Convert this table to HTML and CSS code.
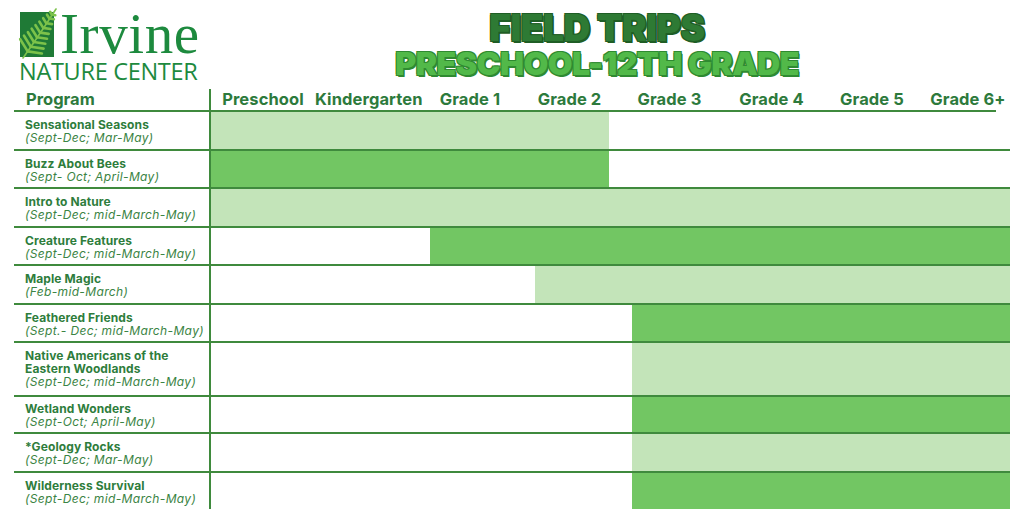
FILE: index.html
```html
<!DOCTYPE html>
<html lang="en">
<head>
<meta charset="utf-8">
<title>Field Trips – Irvine Nature Center</title>
<link rel="stylesheet" href="styles.css">
</head>
<body>
<div class="page">
  <header class="top">
    <div class="logo">
      <div class="logo-row">
        <svg class="fern" width="42" height="52" viewBox="0 0 42 52" aria-hidden="true">
          <rect x="4" y="5" width="34" height="45" fill="#1f7a36"/>
          <g stroke="#7cc24a" stroke-width="2.6" stroke-linecap="round" fill="none">
            <path d="M7 51 Q22 30 40 2" stroke-width="1.6"/>
            <line x1="11.7" y1="44.4" x2="4.2" y2="32.2"/>
            <line x1="11.7" y1="44.4" x2="25.9" y2="46.5"/>
            <line x1="14.8" y1="39.7" x2="8.0" y2="28.7"/>
            <line x1="14.8" y1="39.7" x2="27.6" y2="41.6"/>
            <line x1="17.9" y1="35.0" x2="11.9" y2="25.2"/>
            <line x1="17.9" y1="35.0" x2="29.3" y2="36.7"/>
            <line x1="21.0" y1="30.3" x2="15.7" y2="21.7"/>
            <line x1="21.0" y1="30.3" x2="31.0" y2="31.8"/>
            <line x1="24.1" y1="25.6" x2="19.5" y2="18.2"/>
            <line x1="24.1" y1="25.6" x2="32.7" y2="26.9"/>
            <line x1="27.2" y1="20.9" x2="23.4" y2="14.7"/>
            <line x1="27.2" y1="20.9" x2="34.4" y2="22.0"/>
            <line x1="30.3" y1="16.2" x2="27.2" y2="11.2"/>
            <line x1="30.3" y1="16.2" x2="36.1" y2="17.1"/>
            <line x1="33.4" y1="11.5" x2="31.0" y2="7.7"/>
            <line x1="33.4" y1="11.5" x2="37.9" y2="12.2"/>
            <line x1="35.9" y1="7.7" x2="34.1" y2="4.8"/>
            <line x1="35.9" y1="7.7" x2="39.3" y2="8.2"/>
          </g>
        </svg>
        <span class="irvine">Irvine</span>
      </div>
      <div class="nature">NATURE CENTER</div>
    </div>
    <div class="title">
      <div class="t1">FIELD TRIPS</div>
      <div class="t2">PRESCHOOL-12TH GRADE</div>
    </div>
  </header>

  <section class="chart">
    <div class="row head">
      <div class="prog">Program</div>
      <div class="grades">
        <span>Preschool</span><span>Kindergarten</span><span>Grade 1</span><span>Grade 2</span>
        <span>Grade 3</span><span>Grade 4</span><span>Grade 5</span><span>Grade 6+</span>
      </div>
    </div>

    <div class="row">
      <div class="prog"><b>Sensational Seasons</b><i>(Sept-Dec; Mar-May)</i></div>
      <div class="cells"><div class="bar light" style="margin-left:0;width:398px"></div></div>
    </div>
    <div class="row">
      <div class="prog"><b>Buzz About Bees</b><i>(Sept- Oct; April-May)</i></div>
      <div class="cells"><div class="bar dark" style="margin-left:0;width:398px"></div></div>
    </div>
    <div class="row">
      <div class="prog"><b>Intro to Nature</b><i>(Sept-Dec; mid-March-May)</i></div>
      <div class="cells"><div class="bar light" style="margin-left:0;width:799px"></div></div>
    </div>
    <div class="row">
      <div class="prog"><b>Creature Features</b><i>(Sept-Dec; mid-March-May)</i></div>
      <div class="cells"><div class="bar dark" style="margin-left:219px;width:580px"></div></div>
    </div>
    <div class="row">
      <div class="prog"><b>Maple Magic</b><i>(Feb-mid-March)</i></div>
      <div class="cells"><div class="bar light" style="margin-left:324px;width:475px"></div></div>
    </div>
    <div class="row">
      <div class="prog"><b>Feathered Friends</b><i>(Sept.- Dec; mid-March-May)</i></div>
      <div class="cells"><div class="bar dark" style="margin-left:421px;width:378px"></div></div>
    </div>
    <div class="row tall">
      <div class="prog"><b>Native Americans of the Eastern Woodlands</b><i>(Sept-Dec; mid-March-May)</i></div>
      <div class="cells"><div class="bar light" style="margin-left:421px;width:378px"></div></div>
    </div>
    <div class="row short">
      <div class="prog"><b>Wetland Wonders</b><i>(Sept-Oct; April-May)</i></div>
      <div class="cells"><div class="bar dark" style="margin-left:421px;width:378px"></div></div>
    </div>
    <div class="row">
      <div class="prog"><b>*Geology Rocks</b><i>(Sept-Dec; Mar-May)</i></div>
      <div class="cells"><div class="bar light" style="margin-left:421px;width:378px"></div></div>
    </div>
    <div class="row last">
      <div class="prog"><b>Wilderness Survival</b><i>(Sept-Dec; mid-March-May)</i></div>
      <div class="cells"><div class="bar dark" style="margin-left:421px;width:378px"></div></div>
    </div>
  </section>
</div>
</body>
</html>
```

FILE: styles.css
```css
* { box-sizing: border-box; }

html, body {
  margin: 0;
  padding: 0;
  background: #ffffff;
}

body {
  width: 1024px;
  height: 512px;
  overflow: hidden;
  font-family: Inter, "Noto Sans", sans-serif;
  color: #2e7d3c;
}

.top {
  display: flex;
  align-items: flex-start;
  height: 88px;
  padding-right: 30px;
}

/* ---------- logo ---------- */
.logo {
  width: 200px;
  padding-left: 16px;
  padding-top: 7px;
  color: #1d8a3e;
}

.logo-row {
  display: flex;
  align-items: flex-start;
  height: 53px;
}

.fern { display: block; flex: none; }

.irvine {
  font-family: "Liberation Serif", "DejaVu Serif", serif;
  font-size: 57px;
  line-height: 50px;
  letter-spacing: 0.6px;
  margin-left: 2px;
  margin-top: 2px;
}

.nature {
  font-family: "Open Sans", "Liberation Sans", sans-serif;
  font-size: 23.5px;
  line-height: 22px;
  font-weight: 400;
  letter-spacing: -0.3px;
  padding-left: 3px;
  white-space: nowrap;
}

/* ---------- title ---------- */
.title {
  flex: 1;
  text-align: center;
  font-family: Inter, "DejaVu Sans", sans-serif;
  font-weight: 900;
  padding-top: 9px;
  paint-order: stroke fill;
}

.t1 {
  font-size: 37px;
  line-height: 37px;
  letter-spacing: -0.4px;
  color: #2e7a34;
  -webkit-text-stroke: 2px #ffffff;
  text-shadow: 1px 1px 0 #1f5e25, 1.6px 1.6px 0 #1f5e25, -1px -1px 0 #1f5e25,
               1px -1px 0 #1f5e25, -1px 1px 0 #1f5e25;
}

.t2 {
  font-size: 32px;
  line-height: 36px;
  letter-spacing: -0.5px;
  color: #52b949;
  -webkit-text-stroke: 2px #ffffff;
  text-shadow: 1px 1px 0 #2f8a31, 1.6px 1.6px 0 #2f8a31, -1px -1px 0 #2f8a31,
               1px -1px 0 #2f8a31, -1px 1px 0 #2f8a31;
}

/* ---------- chart ---------- */
.chart {
  margin-left: 14px;
  width: 996px;
}

.row {
  display: grid;
  grid-template-columns: 197px 1fr;
  border-bottom: 2px solid #3f8a3d;
  min-height: 38.5px;
}

.row.head {
  min-height: 23px;
  margin-right: 14px;
  margin-top: 1px;
}

.row.short { min-height: 36px; }
.row.last { border-bottom: none; min-height: 35px; }

.prog {
  border-right: 2px solid #3f8a3d;
  padding: 6px 0 4px 11px;
  display: flex;
  flex-direction: column;
}

.head .prog {
  font-size: 16.5px;
  font-weight: 700;
  line-height: 20px;
  padding: 0 0 0 12px;
  color: #2d7a3c;
}

.prog b {
  font-size: 12px;
  line-height: 13px;
  font-weight: 700;
  letter-spacing: 0.1px;
  color: #2e7d3c;
}

.prog i {
  font-size: 12px;
  line-height: 13px;
  font-weight: 400;
  font-style: italic;
  letter-spacing: 0.35px;
  color: #3b8444;
}

.short .prog { padding-top: 5px; }
.tall .prog b { width: 165px; }
.tall { min-height: 54px; }

.grades {
  display: grid;
  grid-template-columns: 104px 105px 100px 99px 101px 103px 98px 94px;
  font-size: 16.5px;
  font-weight: 700;
  line-height: 20px;
  letter-spacing: 0.1px;
  color: #2d7a3c;
}

.grades span {
  text-align: center;
  white-space: nowrap;
}

.cells {
  display: flex;
}

.bar { height: 100%; }
.bar.light { background: #c3e4b9; }
.bar.dark { background: #72c663; }
```
